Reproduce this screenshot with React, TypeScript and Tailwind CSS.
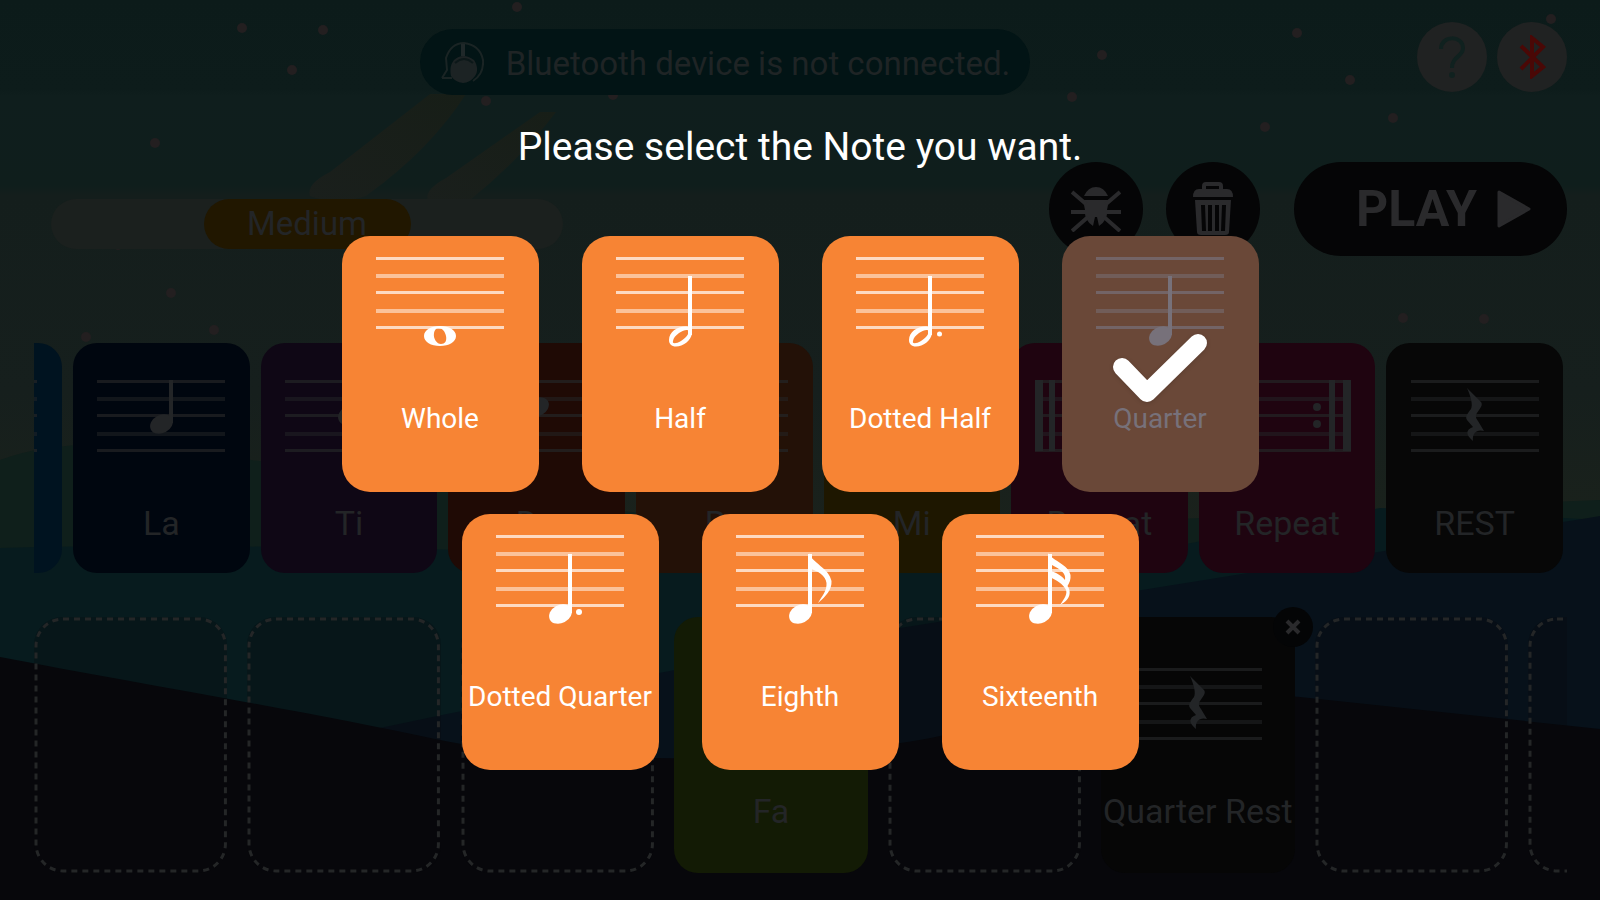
import { useState } from 'react';
import clsx from 'clsx';

type Glyph =
  | 'whole'
  | 'half'
  | 'dottedHalf'
  | 'quarter'
  | 'dottedQuarter'
  | 'eighth'
  | 'sixteenth'
  | 'rest'
  | 'repeatStart'
  | 'repeatEnd'
  | 'none';

const NOTES: { glyph: Glyph; label: string }[] = [
  { glyph: 'whole', label: 'Whole' },
  { glyph: 'half', label: 'Half' },
  { glyph: 'dottedHalf', label: 'Dotted Half' },
  { glyph: 'quarter', label: 'Quarter' },
  { glyph: 'dottedQuarter', label: 'Dotted Quarter' },
  { glyph: 'eighth', label: 'Eighth' },
  { glyph: 'sixteenth', label: 'Sixteenth' },
];

// raise = how far the note sits above its default place on the staff
const PALETTE: { label: string; glyph: Glyph; color: string; raise?: number; flip?: boolean }[] = [
  { label: 'La', glyph: 'quarter', color: 'bg-[#00060f]', raise: 37 },
  { label: 'Ti', glyph: 'quarter', color: 'bg-[#0f0715]', raise: 46 },
  { label: 'Do', glyph: 'quarter', color: 'bg-[#1f0a05]', raise: 52, flip: true },
  { label: 'Re', glyph: 'quarter', color: 'bg-[#231107]', raise: 60, flip: true },
  { label: 'Mi', glyph: 'quarter', color: 'bg-[#1e1700]', raise: 8 },
  { label: 'Repeat', glyph: 'repeatStart', color: 'bg-[#1f0410]' },
  { label: 'Repeat', glyph: 'repeatEnd', color: 'bg-[#1f0410]' },
  { label: 'REST', glyph: 'rest', color: 'bg-[#070707]' },
];

const STARS = [
  [242, 28], [323, 30], [292, 70], [517, 7], [155, 143], [486, 101], [171, 293], [214, 330],
  [118, 245], [86, 337], [613, 95], [1102, 55], [1297, 33], [1072, 97], [1350, 80], [1265, 127],
  [1393, 118], [1551, 19], [1403, 318], [1484, 319],
];

function Scenery() {
  return (
    <svg
      className="absolute inset-0 h-full w-full"
      viewBox="0 0 1600 900"
      preserveAspectRatio="none"
      aria-hidden="true"
    >
      <defs>
        <linearGradient id="sky" x1="0" y1="0" x2="0" y2="1">
          <stop offset="0" stopColor="#0c1b1a" />
          <stop offset="0.16" stopColor="#0d1c1b" />
          <stop offset="0.17" stopColor="#0f1e1d" />
          <stop offset="0.33" stopColor="#0f1e1c" />
          <stop offset="0.35" stopColor="#141e1c" />
          <stop offset="0.7" stopColor="#161f1d" />
          <stop offset="1" stopColor="#1b221b" />
        </linearGradient>
        <linearGradient id="trail" x1="1" y1="0" x2="0" y2="1">
          <stop offset="0" stopColor="#171e17" />
          <stop offset="1" stopColor="#1a1f1c" />
        </linearGradient>
      </defs>
      <rect width="1600" height="560" fill="url(#sky)" />
      <path d="M430 94 L466 94 Q430 150 366 196 Q336 206 310 196 Q306 184 330 172 Z" fill="url(#trail)" />
      <path d="M540 112 L556 112 Q520 160 470 200 Q446 210 428 200 Q424 190 446 178 Z" fill="url(#trail)" />
      {STARS.map(([x, y]) => (
        <circle key={`${x}-${y}`} cx={x} cy={y} r="5" fill="#231f20" />
      ))}
      <path d="M0 460 C80 430 180 450 320 470 C700 540 1000 530 1400 508 L1600 500 V900 H0 Z" fill="#0f1f1b" />
      <path d="M0 548 C300 540 700 560 1100 560 L1380 508 L1600 520 V900 H0 Z" fill="#071b1e" />
      <path d="M380 728 C560 690 760 655 900 628 C1080 600 1300 565 1600 516 V900 H380 Z" fill="#07111a" />
      <path d="M0 657 C140 684 300 710 440 740 C560 765 800 765 940 736 C1060 705 1180 685 1300 697 L1600 729 V900 H0 Z" fill="#07070b" />
    </svg>
  );
}

function SolidHead({ cy = 79 }: { cy?: number }) {
  return <ellipse cx="64.5" cy={cy} rx="12" ry="9" transform={`rotate(-28 64.5 ${cy})`} fill="currentColor" />;
}

function HollowHead() {
  return (
    <path
      fill="currentColor"
      fillRule="evenodd"
      d="M53 83 C53 75 61 69.500 69 69.500 C74 69.500 76.500 72 76 76 C75 84 67 89.500 60 89.500 C55.500 89.500 53 87 53 83 Z M57 84 C56 87 60 87 65 84 C70 81 73 77 72.500 74.500 C72 72 68 73 63 76 C59.500 78.500 57.500 81 57 84 Z"
    />
  );
}

function Stem() {
  return <path d="M74 19 V78" stroke="currentColor" strokeWidth="4" />;
}

function GlyphShape({ glyph }: { glyph: Glyph }) {
  switch (glyph) {
    case 'whole':
      return (
        <path
          fill="currentColor"
          fillRule="evenodd"
          d="M48 79 C48 73 55 69 64 69 C73 69 80 73 80 79 C80 85 73 89 64 89 C55 89 48 85 48 79 Z M58 76 C57 82 61 87 65 87 C69 87 71 84 70 79 C69 74 66 71 62.500 71 C60 71 58.500 73 58 76 Z"
        />
      );
    case 'half':
    case 'dottedHalf':
      return (
        <>
          <HollowHead />
          <Stem />
          {glyph === 'dottedHalf' && <circle cx="83.500" cy="77" r="2.500" fill="currentColor" />}
        </>
      );
    case 'quarter':
    case 'dottedQuarter':
      return (
        <>
          <SolidHead />
          <Stem />
          {glyph === 'dottedQuarter' && <circle cx="83" cy="77" r="3" fill="currentColor" />}
        </>
      );
    case 'eighth':
      return (
        <>
          <SolidHead />
          <Stem />
          <path
            fill="currentColor"
            d="M73 18 C76 28 93 33 95.500 46 C96 55 90 61 82 68 C86 61 91 56 90.500 48 C90 41 81 35 74 34 Z"
          />
        </>
      );
    case 'sixteenth':
      return (
        <>
          <SolidHead />
          <Stem />
          <path
            fill="currentColor"
            d="M72 18 C77 26 93 30 94.500 40 C95 44 93.500 48 91.500 51 C95 56 95.500 64 84 70 C89 63 92 58 89.500 54 C87 49 80 45 74 42 V36 C80 37 86 41 89 45 C91 37 80 32 74 29 Z"
          />
        </>
      );
    case 'rest':
      return (
        <path
          fill="currentColor"
          d="M56 8 L70 22 C72 25 70 27 66 33 C64 36 65 38 67 41 L73 51 C66 49 61 53 62 61 C55 55 54 50 62 47 L56 40 C54 37 56 34 60 29 C62 25 60 17 56 8 Z"
        />
      );
    case 'repeatStart':
      return (
        <g fill="currentColor">
          <rect x="0" y="0" width="8" height="71" />
          <rect x="14" y="0" width="6" height="71" />
          <circle cx="34" cy="27" r="4" />
          <circle cx="34" cy="44" r="4" />
        </g>
      );
    case 'repeatEnd':
      return (
        <g fill="currentColor">
          <rect x="120" y="0" width="8" height="71" />
          <rect x="106" y="0" width="6" height="71" />
          <circle cx="94" cy="27" r="4" />
          <circle cx="94" cy="44" r="4" />
        </g>
      );
    default:
      return null;
  }
}

function Staff({ glyph, raise = 0, flip = false }: { glyph: Glyph; raise?: number; flip?: boolean }) {
  return (
    <svg className="h-[92px] w-32 shrink-0 overflow-visible" viewBox="0 0 128 92" aria-hidden="true">
      <g fill="currentColor">
        <rect x="0" y="0" width="128" height="3" opacity="0.7" />
        <rect x="0" y="17" width="128" height="4" opacity="0.5" />
        <rect x="0" y="34" width="128" height="3" opacity="0.7" />
        <rect x="0" y="52" width="128" height="4" opacity="0.5" />
        <rect x="0" y="69" width="128" height="3" opacity="0.7" />
      </g>
      {flip ? (
        <g>
          <SolidHead cy={79 - raise} />
          <path d={`M55 ${80 - raise} V${135 - raise}`} stroke="currentColor" strokeWidth="4" />
        </g>
      ) : raise ? (
        <g>
          <SolidHead cy={81 - raise} />
          <path d={`M74 ${37 - raise} V${80 - raise}`} stroke="currentColor" strokeWidth="4" />
        </g>
      ) : (
        <GlyphShape glyph={glyph} />
      )}
    </svg>
  );
}

function DeviceIcon() {
  return (
    <svg className="h-11 w-11 shrink-0" viewBox="0 0 44 44" fill="none" aria-hidden="true">
      <path d="M2 38 L7 30 L6 18 Q11 3 24 3 Q40 5 43 20 Q44 34 33 41" stroke="#1a2424" strokeWidth="2" />
      <path d="M2 38 H12" stroke="#1a2424" strokeWidth="2" />
      <path d="M11 36 C10 30 10 25 14 20 Q23 12 34 20 C38 26 38 32 35 36 Q30 43 23 43 Q15 42 11 36 Z" fill="#1c2324" />
      <path d="M15 23 Q24 15 33 23" stroke="#0c1819" strokeWidth="2" />
      <path d="M23 4 V16" stroke="#1f2829" strokeWidth="4" />
    </svg>
  );
}

function BugIcon() {
  return (
    <svg className="h-[46px] w-[50px]" viewBox="0 0 50 46" aria-hidden="true">
      <g fill="#2a2a2c">
        <path d="M13 10 Q17 1 25 1 Q33 1 37 10 Z" />
        <path d="M12 14 H38 L36 24 Q37 34 28 40 L26 31 H24 L22 40 Q13 34 14 24 Z" />
      </g>
      <g stroke="#2a2a2c" strokeWidth="4" fill="none">
        <path d="M1 6 L15 18 M49 6 L35 18" />
        <path d="M0 26 H50" />
        <path d="M1 45 L17 31 M49 45 L33 31" />
      </g>
    </svg>
  );
}

function TrashIcon() {
  return (
    <svg className="h-[54px] w-[42px]" viewBox="0 0 42 54" aria-hidden="true">
      <path d="M12 8 V4 Q12 2 14 2 H27 Q29 2 29 4 V8" stroke="#2a2a2c" strokeWidth="4" fill="none" />
      <path d="M1 15 Q1 7 7 7 H35 Q41 7 41 15 Z" fill="#2a2a2c" />
      <path d="M3 18 H39 L37 50 Q37 53 33 53 H9 Q5 53 5 50 Z" fill="#2a2a2c" />
      <path d="M11 23 L12 49 M18 23 V49 M25 23 V49 M32 23 L31 49" stroke="#050506" strokeWidth="4" />
    </svg>
  );
}

function Slot() {
  return (
    <div className="h-64 w-full rounded-[28px] bg-[#07080a]/25">
      <svg className="h-full w-full" aria-hidden="true">
        <rect
          className="h-[calc(100%-4px)] w-[calc(100%-4px)]"
          x="2"
          y="2"
          rx="27"
          fill="none"
          stroke="#242627"
          strokeWidth="3"
          strokeDasharray="6 5"
        />
      </svg>
    </div>
  );
}

function Stage() {
  return (
    <div className="relative text-[#232527]">
      <header className="flex items-start px-[33px] pt-[22px]">
        <div className="flex flex-1 justify-center">
          <p className="mt-[7px] flex h-[66px] items-center gap-[22px] rounded-full bg-[#021415] px-5 text-[33px] whitespace-nowrap text-[#1f2425]">
            <DeviceIcon />
            <span className="pt-1">Bluetooth device is not connected.</span>
          </p>
        </div>
        <div className="flex gap-2.5">
          <button
            type="button"
            aria-label="Help"
            className="flex h-[70px] w-[70px] items-center justify-center rounded-full bg-[#202222]"
          >
            <svg className="h-[42px] w-7" viewBox="0 0 28 42" fill="none" aria-hidden="true">
              <path d="M3 13 C3 -1 25 -1 25 12 C25 21 14 20 14 32" stroke="#10211f" strokeWidth="4" />
              <circle cx="14" cy="39" r="3" fill="#10211f" />
            </svg>
          </button>
          <button
            type="button"
            aria-label="Bluetooth"
            className="flex h-[70px] w-[70px] items-center justify-center rounded-full bg-[#202222]"
          >
            <svg className="h-11 w-7" viewBox="0 0 28 44" fill="none" aria-hidden="true">
              <path d="M3 11 L25 32 L14 41 V3 L25 12 L3 34" stroke="#4a0806" strokeWidth="4" />
            </svg>
          </button>
        </div>
      </header>

      <div className="mt-[67px] flex items-end px-[33px]">
        <div className="mb-[7px] ml-[18px] flex h-[50px] w-[512px] justify-center rounded-full bg-[#1b201e]">
          <button type="button" className="w-[207px] rounded-full bg-[#211700] text-[33px] leading-[50px]">
            Medium
          </button>
        </div>
        <button
          type="button"
          aria-label="Debug"
          className="ml-auto flex h-[94px] w-[94px] items-center justify-center rounded-full bg-[#050506]"
        >
          <BugIcon />
        </button>
        <button
          type="button"
          aria-label="Clear"
          className="ml-[23px] flex h-[94px] w-[94px] items-center justify-center rounded-full bg-[#050506]"
        >
          <TrashIcon />
        </button>
        <button
          type="button"
          className="ml-[34px] flex h-[94px] w-[273px] items-center justify-end gap-5 rounded-full bg-[#050506] pr-9 text-[50px] font-bold text-[#2a2a2c]"
        >
          PLAY
          <svg className="h-[38px] w-[34px]" viewBox="0 0 34 38" aria-hidden="true">
            <path d="M2 2 L32 19 L2 36 Z" fill="#2a2a2c" stroke="#2a2a2c" strokeWidth="3" strokeLinejoin="round" />
          </svg>
        </button>
      </div>

      <div className="mt-[87px] mr-[37px] ml-[34px] flex gap-[11px]">
        <div className="flex h-[230px] w-7 justify-end overflow-hidden rounded-r-3xl bg-[#001320] pt-[37px] pr-[25px]">
          <Staff glyph="none" />
        </div>
        {PALETTE.map((card, i) => (
          <button
            key={i}
            type="button"
            className={clsx(
              'flex h-[230px] min-w-0 flex-1 flex-col items-center gap-[31px] rounded-3xl pt-[37px] text-[34px] leading-10',
              card.color,
            )}
          >
            <Staff glyph={card.glyph} raise={card.raise} flip={card.flip} />
            {card.label}
          </button>
        ))}
      </div>

      <div className="mt-11 mr-[33px] ml-[34px] grid grid-cols-[repeat(7,minmax(0,1fr))_39px] gap-5">
        <Slot />
        <Slot />
        <Slot />
        <div className="flex h-64 flex-col items-center gap-[31px] rounded-3xl bg-[#131b05] pt-[51px] text-[34px] leading-10">
          <Staff glyph="quarter" />
          Fa
        </div>
        <Slot />
        <div className="relative flex h-64 flex-col items-center gap-[31px] rounded-3xl bg-[#060606] pt-[51px] text-[34px] leading-10 whitespace-nowrap">
          <Staff glyph="rest" />
          Quarter Rest
          <button
            type="button"
            aria-label="Remove"
            className="absolute -top-2.5 -right-[18px] flex h-10 w-10 items-center justify-center rounded-full bg-[#040506]"
          >
            <svg className="h-4 w-4" viewBox="0 0 16 16" aria-hidden="true">
              <path d="M2 2 L14 14 M14 2 L2 14" stroke="#2a2a2c" strokeWidth="4" />
            </svg>
          </button>
        </div>
        <Slot />
        <div className="overflow-hidden">
          <div className="w-[193px]">
            <Slot />
          </div>
        </div>
      </div>
    </div>
  );
}

export default function App() {
  const [selected, setSelected] = useState<Glyph>('quarter');

  return (
    <main className="relative h-screen overflow-hidden bg-[#07070b] font-['Roboto',sans-serif]">
      <Scenery />
      <Stage />

      <div role="dialog" aria-labelledby="note-title" className="absolute inset-0 flex flex-col items-center pt-[123px]">
        <h1 id="note-title" className="text-[39px] leading-12 text-white">
          Please select the Note you want.
        </h1>
        <div className="mt-[65px] flex max-w-[960px] flex-wrap justify-center gap-x-[43px] gap-y-[22px]">
          {NOTES.map((note) => {
            const active = note.glyph === selected;
            return (
              <button
                key={note.glyph}
                type="button"
                aria-pressed={active}
                onClick={() => setSelected(note.glyph)}
                className={clsx(
                  'relative flex h-64 w-[197px] flex-col items-center gap-[54px] rounded-[28px] pt-[21px] text-[28px] leading-8 whitespace-nowrap',
                  active ? 'bg-[#6a4838] text-[#77717a]' : 'bg-[#f78434] text-white',
                )}
              >
                <Staff glyph={note.glyph} />
                {note.label}
                {active && (
                  <svg
                    className="absolute top-24 left-[50px] h-[74px] w-24 drop-shadow-sm"
                    viewBox="0 0 96 74"
                    fill="none"
                    aria-hidden="true"
                  >
                    <path
                      d="M10 35 L35 61 L86 11"
                      stroke="#fff"
                      strokeWidth="18"
                      strokeLinecap="round"
                      strokeLinejoin="round"
                    />
                  </svg>
                )}
              </button>
            );
          })}
        </div>
      </div>
    </main>
  );
}
